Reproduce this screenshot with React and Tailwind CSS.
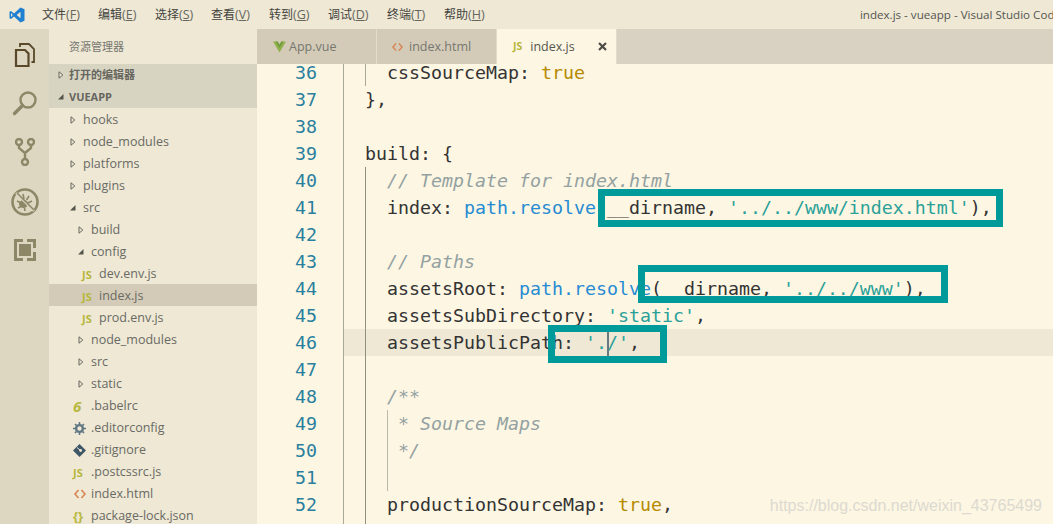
const ui = '"Open Sans", "Noto Sans CJK SC", sans-serif';

const menus = [
  ['文件', 'F', 'w-[56px]'],
  ['编辑', 'E', 'w-[57px]'],
  ['选择', 'S', 'w-[56px]'],
  ['查看', 'V', 'w-[58px]'],
  ['转到', 'G', 'w-[59px]'],
  ['调试', 'D', 'w-[59px]'],
  ['终端', 'T', 'w-[57px]'],
  ['帮助', 'H', 'w-[50px]'],
];

const Arrow = ({ open }) =>
  open ? (
    <svg width="6" height="6" viewBox="0 0 6 6" className="shrink-0">
      <path d="M0 5.5 L5.5 5.5 L5.5 0 Z" fill="#55554d" />
    </svg>
  ) : (
    <svg width="6" height="8" viewBox="0 0 6 8" className="shrink-0">
      <path d="M1 .8 L4.8 4 L1 7.2 Z" fill="#eee8d5" stroke="#66665e" strokeWidth="1" />
    </svg>
  );

const FileIcon = ({ type }) => {
  if (type === 'js') return <span className="w-[14px] text-[11px] font-bold text-[#b7b73b] leading-none">JS</span>;
  if (type === 'html')
    return (
      <svg width="12" height="10" viewBox="0 0 12 10" fill="none" stroke="#d9824f" strokeWidth="1.5" className="mx-px">
        <path d="M4.5 1 L1 5 L4.5 9 M7.5 1 L11 5 L7.5 9" />
      </svg>
    );
  if (type === 'babel') return <span className="w-[14px] text-[15px] italic font-bold text-[#b8b83f] leading-none">6</span>;
  if (type === 'gear')
    return (
      <svg width="13" height="13" viewBox="0 0 13 13">
        <circle cx="6.5" cy="6.5" r="3.4" fill="none" stroke="#5f7683" strokeWidth="2.4" />
        <path d="M6.5 0 V13 M0 6.5 H13 M2 2 L11 11 M11 2 L2 11" stroke="#5f7683" strokeWidth="1.6" strokeDasharray="2.2 8.6" />
      </svg>
    );
  if (type === 'git')
    return (
      <svg width="13" height="13" viewBox="0 0 13 13">
        <path d="M6.5 0 L13 6.5 L6.5 13 L0 6.5 Z" fill="#3f5666" />
        <circle cx="7.6" cy="6.5" r="1.4" fill="#eee8d5" />
        <path d="M4 3.5 L7.6 6.5" stroke="#eee8d5" strokeWidth="1" />
      </svg>
    );
  return <span className="w-[14px] text-[13px] font-bold text-[#b7b73b] leading-none">{'{}'}</span>;
};

const tree = [
  { name: 'hooks', depth: 0, arrow: 'closed' },
  { name: 'node_modules', depth: 0, arrow: 'closed' },
  { name: 'platforms', depth: 0, arrow: 'closed' },
  { name: 'plugins', depth: 0, arrow: 'closed' },
  { name: 'src', depth: 0, arrow: 'open' },
  { name: 'build', depth: 1, arrow: 'closed' },
  { name: 'config', depth: 1, arrow: 'open' },
  { name: 'dev.env.js', depth: 2, icon: 'js' },
  { name: 'index.js', depth: 2, icon: 'js', active: true },
  { name: 'prod.env.js', depth: 2, icon: 'js' },
  { name: 'node_modules', depth: 1, arrow: 'closed' },
  { name: 'src', depth: 1, arrow: 'closed' },
  { name: 'static', depth: 1, arrow: 'closed' },
  { name: '.babelrc', depth: 1, icon: 'babel' },
  { name: '.editorconfig', depth: 1, icon: 'gear' },
  { name: '.gitignore', depth: 1, icon: 'git' },
  { name: '.postcssrc.js', depth: 1, icon: 'js' },
  { name: 'index.html', depth: 1, icon: 'html' },
  { name: 'package-lock.json', depth: 1, icon: 'json' },
];

const TreeRow = ({ row }) => {
  const pad = row.arrow
    ? row.depth === 0
      ? 'pl-[21px]'
      : 'pl-[29px]'
    : row.depth === 2
      ? 'pl-[33px]'
      : 'pl-[24px]';
  return (
    <div className={`flex items-center h-[22px] shrink-0 pt-[2px] ${pad} ${row.active ? 'bg-[#d3cbb7]' : ''}`}>
      {row.arrow ? (
        <span className="w-[13px] flex items-center">
          <Arrow open={row.arrow === 'open'} />
        </span>
      ) : (
        <span className={`${row.depth === 2 ? 'w-[17px]' : 'w-[18px]'} flex items-center`}>
          <FileIcon type={row.icon} />
        </span>
      )}
      <span className="text-[12.5px] text-[#6a6a64] whitespace-nowrap">{row.name}</span>
    </div>
  );
};

const C = ({ c, children }) => <span className={c}>{children}</span>;
const key = 'text-[#333333]';
const blue = 'text-[#268bd2]';
const str = 'text-[#2aa198]';
const bool = 'text-[#b58900]';
const cm = 'text-[#93a1a1] italic';

const lines = [
  [36, <>    cssSourceMap: <C c={bool}>true</C></>],
  [37, <>  {'},'}</>],
  [38, ''],
  [39, <>  build: {'{'}</>],
  [40, <C c={cm}>{'    // Template for index.html'}</C>],
  [41, <>    index: <C c={blue}>path.resolve</C>(__dirname, <C c={str}>'../../www/index.html'</C>),</>],
  [42, ''],
  [43, <C c={cm}>{'    // Paths'}</C>],
  [44, <>    assetsRoot: <C c={blue}>path.resolve</C>(__dirname, <C c={str}>'../../www'</C>),</>],
  [45, <>    assetsSubDirectory: <C c={str}>'static'</C>,</>],
  [46, <>    assetsPublicPath: <C c={str}>'./'</C>,</>],
  [47, ''],
  [48, <C c={cm}>{'    /**'}</C>],
  [49, <C c={cm}>{'     * Source Maps'}</C>],
  [50, <C c={cm}>{'     */'}</C>],
  [51, ''],
  [52, <>    productionSourceMap: <C c={bool}>true</C>,</>],
];

const Tab = ({ icon, label, active }) => (
  <div
    className={`flex items-center h-full w-[120px] shrink-0 border-r border-[#e3dcc9] ${
      active ? 'bg-[#fdf6e3] text-[#55554e] pl-[16px]' : 'bg-[#d3cbb8] text-[#777770] pl-[16px]'
    }`}
  >
    {icon}
    <span className="text-[12.5px] pt-[2px] whitespace-nowrap">{label}</span>
    {active && (
      <svg width="9" height="9" viewBox="0 0 9 9" className="ml-auto mr-[9px]" stroke="#4d4d47" strokeWidth="2.2">
        <path d="M1 1 L8 8 M8 1 L1 8" />
      </svg>
    )}
  </div>
);

export default function App() {
  return (
    <div
      className="w-[1053px] h-[524px] overflow-hidden flex flex-col bg-[#fdf6e3] relative"
      style={{ fontFamily: ui }}
    >
      {/* title bar */}
      <div className="h-[29px] shrink-0 bg-[#eee8d5] flex items-center pt-[1px] text-[#44443e]">
        <svg width="16" height="16" viewBox="0 0 16 16" className="ml-[9px] mr-[17px] shrink-0">
          <path d="M11.5 .5 L15.5 2.3 V13.7 L11.5 15.5 L5 9.6 L2 12 L.5 11.2 V4.8 L2 4 L5 6.4 Z M11.5 4.8 L7.7 8 L11.5 11.2 Z M2 6 V10 L3.8 8 Z" fill="#1f7fd0" fillRule="evenodd" />
        </svg>
        {menus.map(([label, letter, width]) => (
          <div key={letter} className={`${width} text-[12px] whitespace-nowrap`}>
            {label}
            <span className="text-[#66665e] text-[12.5px]">(<span className="underline">{letter}</span>)</span>
          </div>
        ))}
        <div className="ml-auto -mr-[8px] text-[11.6px] text-[#55554f] whitespace-nowrap">index.js - vueapp - Visual Studio Code</div>
      </div>

      <div className="flex-1 flex min-h-0">
        {/* activity bar */}
        <div className="w-[49px] shrink-0 bg-[#ddd6c1] flex flex-col items-center pt-[13px]">
          <svg width="24" height="26" viewBox="0 0 24 26" fill="none" stroke="#59492a" strokeWidth="2.2">
            <path d="M3 8 H12 L15.5 11.5 V24 H3 Z" />
            <path d="M7 5 V2 H16 L21 7 V20 H18.5" strokeWidth="1.8" />
          </svg>
          <svg width="26" height="26" viewBox="0 0 26 26" fill="none" stroke="#8d8768" className="mt-[22px]">
            <circle cx="16" cy="10" r="7.5" strokeWidth="2.4" />
            <path d="M10.5 15.5 L2.5 23.5" strokeWidth="3.4" strokeLinecap="round" />
          </svg>
          <svg width="20" height="28" viewBox="0 0 20 28" fill="none" stroke="#8d8768" strokeWidth="2.4" className="mt-[22px]">
            <circle cx="4" cy="4" r="3" />
            <circle cx="16" cy="4" r="3" />
            <circle cx="10" cy="24" r="3" />
            <path d="M4 7 V10 L10 15 V21 M16 7 V10 L10 15" />
          </svg>
          <svg width="28" height="28" viewBox="0 0 28 28" fill="none" stroke="#8d8768" className="mt-[22px]">
            <circle cx="14" cy="14" r="12.5" strokeWidth="2.6" />
            <ellipse cx="12.5" cy="16" rx="4.5" ry="4" fill="#8d8768" stroke="none" />
            <path d="M12 6 L13 11 M18 8 L15.5 12 M21 13 L17 15 M6 13 L9 14.5 M7 20 L10 18.5 M14 23 L13.5 20" strokeWidth="1.6" />
            <path d="M5 5 L23 23" strokeWidth="2.4" stroke="#ddd6c1" />
            <path d="M6 5 L23 22" strokeWidth="1.6" />
          </svg>
          <svg width="22" height="22" viewBox="0 0 22 22" className="mt-[23px]">
            <path d="M0 0 H9 V3 H3 V19 H9 V22 H0 Z M13 0 H22 V9 H19 V3 H13 Z M13 19 H19 V13 H22 V22 H13 Z" fill="#8d8768" />
            <rect x="5" y="5" width="12" height="12" fill="#8d8768" />
          </svg>
        </div>

        {/* sidebar */}
        <div className="w-[208px] shrink-0 bg-[#eee8d5] flex flex-col overflow-hidden">
          <div className="h-[35px] shrink-0 flex items-center pl-[20px] pt-[1px] text-[11px] text-[#77776f]">资源管理器</div>
          <div className="h-[22px] shrink-0 bg-[#d8d4c2] flex items-center pl-[9px] gap-[5px] text-[11px] font-bold text-[#66665e]">
            <Arrow />
            打开的编辑器
          </div>
          <div className="h-[22px] shrink-0 bg-[#d8d4c2] flex items-center pl-[9px] gap-[5px] text-[11px] font-bold text-[#66665e]">
            <Arrow open />
            VUEAPP
          </div>
          {tree.map((row, i) => (
            <TreeRow key={i} row={row} />
          ))}
        </div>

        {/* editor */}
        <div className="flex-1 flex flex-col min-w-0">
          <div className="h-[35px] shrink-0 bg-[#d9d2c2] flex">
            <Tab
              label="App.vue"
              icon={
                <svg width="13" height="12" viewBox="0 0 14 12" className="mr-[3px]">
                  <path d="M0 0 H5 L7 3.5 L9 0 H14 L7 12 Z" fill="#8fb04a" />
                  <path d="M3 0 H5 L7 3.5 L9 0 H11 L7 7 Z" fill="#6f9a3c" />
                </svg>
              }
            />
            <Tab
              label="index.html"
              icon={
                <svg width="11" height="10" viewBox="0 0 12 10" fill="none" stroke="#d9824f" strokeWidth="1.5" className="mr-[6px] -ml-[1px]">
                  <path d="M4.5 1 L1 5 L4.5 9 M7.5 1 L11 5 L7.5 9" />
                </svg>
              }
            />
            <Tab
              active
              label="index.js"
              icon={<span className="text-[10.5px] font-bold text-[#b7b73b] mr-[8px] leading-none">JS</span>}
            />
          </div>
          <div
            className="relative flex-1 overflow-hidden"
            style={{ fontFamily: '"DejaVu Sans Mono", monospace' }}
          >
            <div className="text-[18.27px] leading-[27px] -mt-[5px]">
              {lines.map(([n, code]) => (
                <div key={n} className={`flex h-[27px] ${n === 46 ? 'bg-[linear-gradient(90deg,transparent_86px,#eee8d5_86px)]' : ''}`}>
                  <span className="w-[60px] text-right text-[#2a7f9e] shrink-0">{n}</span>
                  <span className={`pl-[26px] whitespace-pre ${key}`}>{code}</span>
                </div>
              ))}
            </div>
            <span className="absolute left-[86px] top-0 h-full w-px bg-[#a9a99a]" />
            <span className="absolute left-[108px] top-0 h-[22px] w-px bg-[#a9a99a]" />
            <span className="absolute left-[108px] top-[103px] bottom-0 w-px bg-[#8f8f80]" />
            <span className="absolute left-[130px] top-[346px] h-[81px] w-px bg-[#b9b9aa]" />
            <span className="absolute left-[350px] top-[265px] h-[27px] w-[2px] bg-[#657b83]" />
          </div>
        </div>
      </div>

      {/* annotation boxes drawn over the screenshot */}
      <div className="absolute left-[598px] top-[189px] w-[405px] h-[38px] border-[7px] border-[#009a9a]" />
      <div className="absolute left-[638px] top-[265px] w-[310px] h-[38px] border-[7px] border-[#009a9a]" />
      <div className="absolute left-[548px] top-[325px] w-[119px] h-[38px] border-[7px] border-[#009a9a]" />
      <div className="absolute right-[11px] bottom-[6px] text-[16px] text-[#dcdad0] whitespace-nowrap" style={{ fontFamily: '"Liberation Sans", sans-serif' }}>
        https://blog.csdn.net/weixin_43765499
      </div>
    </div>
  );
}
